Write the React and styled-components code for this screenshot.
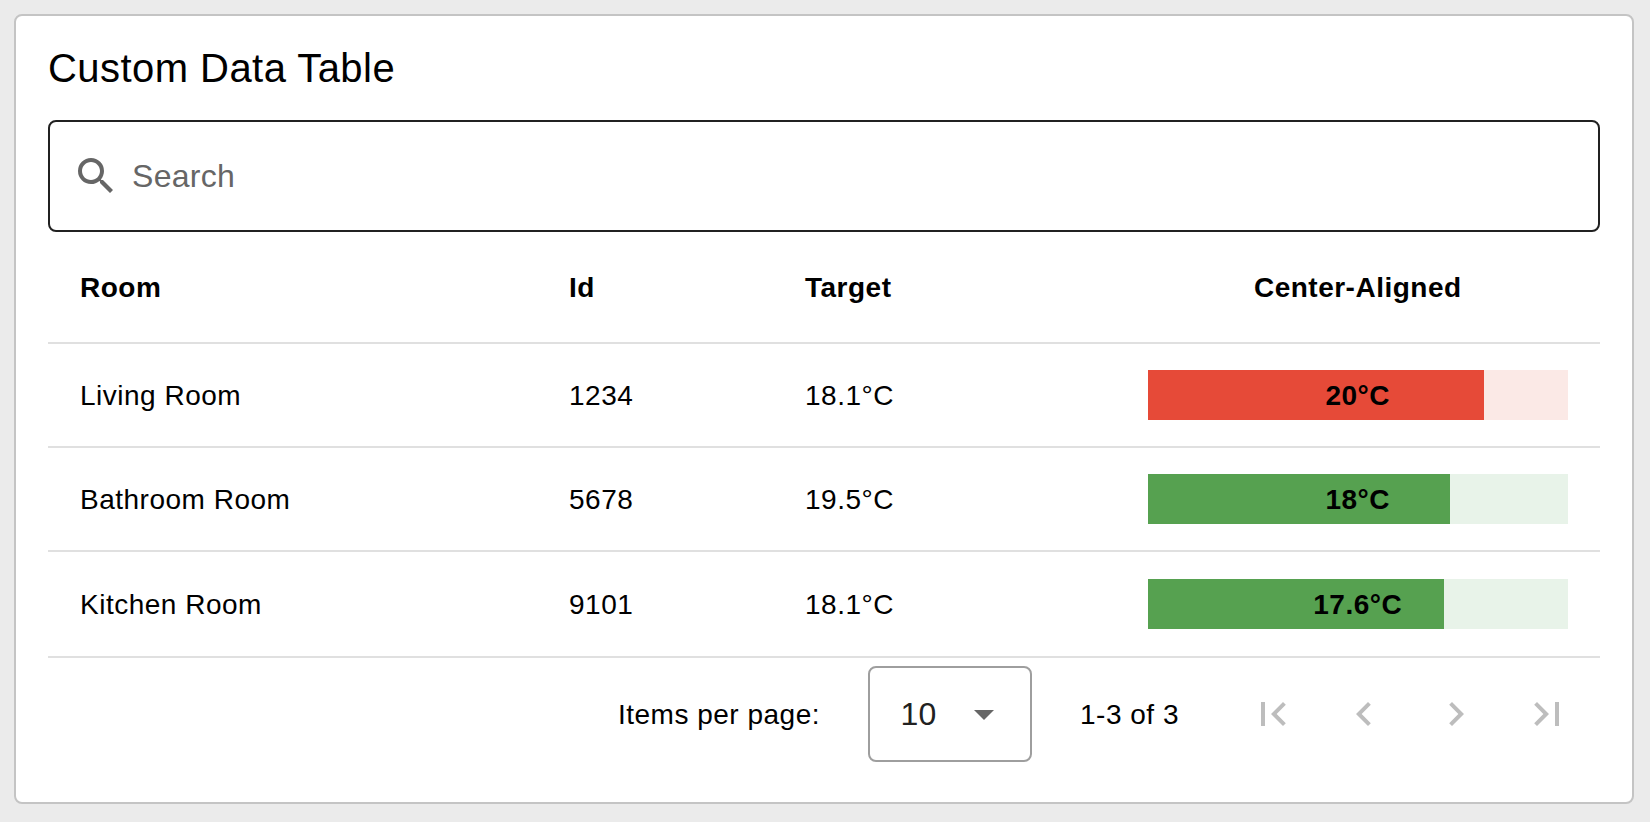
import React from 'react';
import styled, { createGlobalStyle } from 'styled-components';

const GlobalStyle = createGlobalStyle`
  * { box-sizing: border-box; }
  body {
    margin: 0;
    background: #ebebeb;
    font-family: "Liberation Sans", Helvetica, Arial, sans-serif;
    color: #000;
  }
`;

const Page = styled.main`
  height: 822px;
  padding: 14px 16px 18px 14px;
  background: #ebebeb;
`;

const Card = styled.section`
  height: 790px;
  padding: 32px;
  border: 2px solid #c4c4c4;
  border-radius: 8px;
  background: #fff;
`;

const Title = styled.h1`
  margin: 0;
  height: 72px;
  font-size: 40px;
  line-height: 40px;
  font-weight: 400;
  letter-spacing: 0.45px;
`;

const SearchField = styled.label`
  display: flex;
  align-items: center;
  gap: 12px;
  height: 112px;
  padding: 0 22px;
  border: 2px solid #212121;
  border-radius: 8px;
`;

const SearchInput = styled.input`
  flex: 1;
  min-width: 0;
  padding: 0;
  border: 0;
  outline: 0;
  background: transparent;
  font: 400 32px/40px "Liberation Sans", Helvetica, Arial, sans-serif;
  letter-spacing: 0.3px;
  color: #212121;
  &::placeholder { color: #666; opacity: 1; }
`;

const Icon = styled.svg`
  display: block;
  flex: none;
  width: 48px;
  height: 48px;
  fill: ${(p) => p.$color || '#666'};
`;

const Row = styled.div`
  display: grid;
  grid-template-columns: 489px 236px 342.5px 484.5px;
  align-items: center;
  height: ${(p) => (p.$head ? 112 : 104)}px;
  border-bottom: ${(p) => (p.$last ? 0 : 2)}px solid #e0e0e0;
  font-size: 28px;
  line-height: 40px;
  letter-spacing: 0.5px;
  font-weight: ${(p) => (p.$head ? 700 : 400)};
`;

const Cell = styled.div`
  padding: ${(p) => (p.$bar ? 0 : 2)}px 32px 0;
  text-align: ${(p) => (p.$center ? 'center' : 'left')};
`;

const Bar = styled.div`
  display: grid;
  height: 50px;
  background: ${(p) => (p.$hot ? '#fbe9e6' : '#e8f3e9')};
`;

const BarFill = styled.div`
  grid-area: 1 / 1;
  height: 50px;
  background: ${(p) => (p.$hot ? '#e64a38' : '#56a150')};
`;

const BarLabel = styled.strong`
  grid-area: 1 / 1;
  align-self: center;
  padding-top: 2px;
  text-align: center;
  font-weight: 700;
`;

const Footer = styled.footer`
  display: flex;
  align-items: center;
  justify-content: flex-end;
  height: 114px;
  padding: 0 29px 0 0;
  border-top: 2px solid #e0e0e0;
  font-size: 28px;
  line-height: 40px;
  letter-spacing: 0.5px;
`;

const PageSizeLabel = styled.span`
  margin-right: 48px;
  padding-top: 2px;
`;

const PageSize = styled.button`
  display: flex;
  align-items: center;
  justify-content: space-between;
  width: 164px;
  height: 96px;
  padding: 0 22px 0 30.5px;
  border: 2px solid #9e9e9e;
  border-radius: 8px;
  background: transparent;
  font: 400 32px/40px "Liberation Sans", Helvetica, Arial, sans-serif;
  letter-spacing: 0.3px;
  color: #212121;
`;

const Range = styled.span`
  width: 168.5px;
  margin-left: 48px;
  padding-top: 2px;
`;

const Pager = styled.nav`
  display: flex;
  gap: 43.5px;
`;

const PagerButton = styled.button`
  padding: 0;
  border: 0;
  background: transparent;
`;

const rooms = [
  { name: 'Living Room', id: '1234', target: '18.1°C', current: 20 },
  { name: 'Bathroom Room', id: '5678', target: '19.5°C', current: 18 },
  { name: 'Kitchen Room', id: '9101', target: '18.1°C', current: 17.6 },
];

const pagerIcons = [
  ['First page', 'M18.41,16.59L13.82,12L18.41,7.41L17,6L11,12L17,18L18.41,16.59M6,6H8V18H6V6Z'],
  ['Previous page', 'M15.41,16.58L10.83,12L15.41,7.41L14,6L8,12L14,18L15.41,16.58Z'],
  ['Next page', 'M8.59,16.58L13.17,12L8.59,7.41L10,6L16,12L10,18L8.59,16.58Z'],
  ['Last page', 'M5.59,7.41L10.18,12L5.59,16.59L7,18L13,12L7,6L5.59,7.41M16,6H18V18H16V6Z'],
];

function Temperature({ value }) {
  const hot = value >= 20;
  return (
    <Bar $hot={hot}>
      <BarFill $hot={hot} style={{ width: `${(value / 25) * 100}%` }} />
      <BarLabel>{value}°C</BarLabel>
    </Bar>
  );
}

export default function App() {
  return (
    <>
      <GlobalStyle />
      <Page>
        <Card>
          <Title>Custom Data Table</Title>
          <SearchField>
            <Icon viewBox="0 0 24 24">
              <path d="M9.5,3A6.5,6.5 0 0,1 16,9.5C16,11.11 15.41,12.59 14.44,13.73L14.71,14H15.5L20.5,19L19,20.5L14,15.5V14.71L13.73,14.44C12.59,15.41 11.11,16 9.5,16A6.5,6.5 0 0,1 3,9.5A6.5,6.5 0 0,1 9.5,3M9.5,5C7,5 5,7 5,9.5C5,12 7,14 9.5,14C12,14 14,12 14,9.5C14,7 12,5 9.5,5Z" />
            </Icon>
            <SearchInput placeholder="Search" />
          </SearchField>
          <Row $head>
            <Cell>Room</Cell>
            <Cell>Id</Cell>
            <Cell>Target</Cell>
            <Cell $center>Center-Aligned</Cell>
          </Row>
          {rooms.map((room, i) => (
            <Row key={room.id} $last={i === rooms.length - 1}>
              <Cell>{room.name}</Cell>
              <Cell>{room.id}</Cell>
              <Cell>{room.target}</Cell>
              <Cell $center $bar>
                <Temperature value={room.current} />
              </Cell>
            </Row>
          ))}
          <Footer>
            <PageSizeLabel>Items per page:</PageSizeLabel>
            <PageSize>
              10
              <Icon viewBox="0 0 24 24">
                <path d="M7,10L12,15L17,10H7Z" />
              </Icon>
            </PageSize>
            <Range>1-3 of 3</Range>
            <Pager>
              {pagerIcons.map(([label, d]) => (
                <PagerButton key={label} aria-label={label}>
                  <Icon viewBox="0 0 24 24" $color="#bdbdbd">
                    <path d={d} />
                  </Icon>
                </PagerButton>
              ))}
            </Pager>
          </Footer>
        </Card>
      </Page>
    </>
  );
}
